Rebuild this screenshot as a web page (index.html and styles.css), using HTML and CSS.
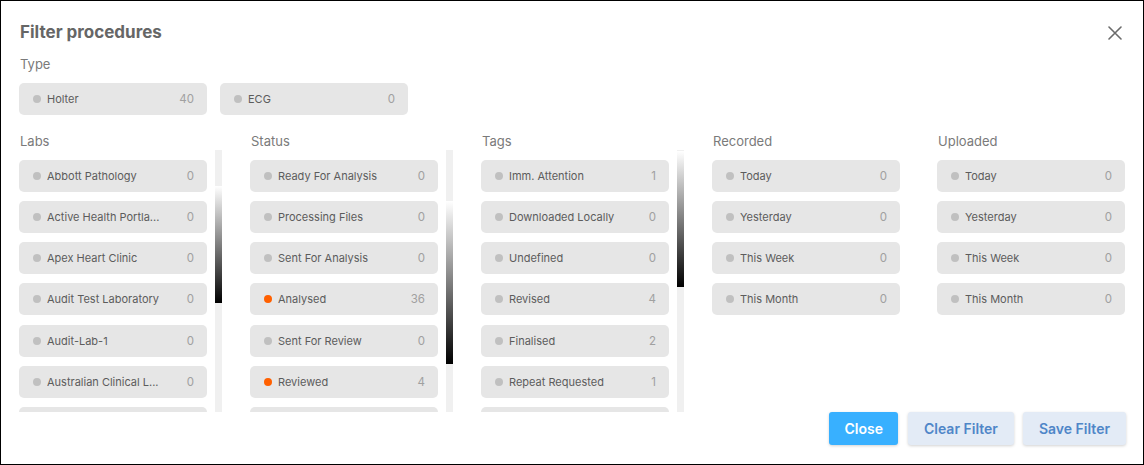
FILE: index.html
```html
<!DOCTYPE html>
<html>
<head>
  <meta charset="UTF-8">
  <meta name="viewport" content="width=device-width, initial-scale=1.0">
  <link rel="stylesheet" href="styles.css">
</head>
<body>
  <div class="modal">
    <div class="modal-header">
      <h1>Filter procedures</h1>
      <button class="close-icon" aria-label="Close">
        <svg width="14" height="14" viewBox="0 0 14 14">
          <path d="M1 1 L13 13 M13 1 L1 13" stroke="#6b6b6b" stroke-width="1.6" stroke-linecap="round"/>
        </svg>
      </button>
    </div>

    <div class="group-label">Type</div>
    <div class="type-row">
      <div class="chip"><span class="dot"></span><span class="name">Holter</span><span class="count">40</span></div>
      <div class="chip"><span class="dot"></span><span class="name">ECG</span><span class="count">0</span></div>
    </div>

    <div class="filters">
      <div class="col">
        <div class="col-label">Labs</div>
        <div class="scroll-wrap">
          <div class="list">
            <div class="chip"><span class="dot"></span><span class="name">Abbott Pathology</span><span class="count">0</span></div>
            <div class="chip"><span class="dot"></span><span class="name">Active Health Portla...</span><span class="count">0</span></div>
            <div class="chip"><span class="dot"></span><span class="name">Apex Heart Clinic</span><span class="count">0</span></div>
            <div class="chip"><span class="dot"></span><span class="name">Audit Test Laboratory</span><span class="count">0</span></div>
            <div class="chip"><span class="dot"></span><span class="name">Audit-Lab-1</span><span class="count">0</span></div>
            <div class="chip"><span class="dot"></span><span class="name">Australian Clinical L...</span><span class="count">0</span></div>
            <!-- next item, still below the fold -->
            <div class="chip"></div>
          </div>
          <div class="scrollbar"><div class="thumb thumb-labs"></div></div>
        </div>
      </div>

      <div class="col">
        <div class="col-label">Status</div>
        <div class="scroll-wrap">
          <div class="list">
            <div class="chip"><span class="dot"></span><span class="name">Ready For Analysis</span><span class="count">0</span></div>
            <div class="chip"><span class="dot"></span><span class="name">Processing Files</span><span class="count">0</span></div>
            <div class="chip"><span class="dot"></span><span class="name">Sent For Analysis</span><span class="count">0</span></div>
            <div class="chip"><span class="dot active"></span><span class="name">Analysed</span><span class="count">36</span></div>
            <div class="chip"><span class="dot"></span><span class="name">Sent For Review</span><span class="count">0</span></div>
            <div class="chip"><span class="dot active"></span><span class="name">Reviewed</span><span class="count">4</span></div>
            <div class="chip"></div>
          </div>
          <div class="scrollbar"><div class="thumb thumb-status"></div></div>
        </div>
      </div>

      <div class="col">
        <div class="col-label">Tags</div>
        <div class="scroll-wrap">
          <div class="list">
            <div class="chip"><span class="dot"></span><span class="name">Imm. Attention</span><span class="count">1</span></div>
            <div class="chip"><span class="dot"></span><span class="name">Downloaded Locally</span><span class="count">0</span></div>
            <div class="chip"><span class="dot"></span><span class="name">Undefined</span><span class="count">0</span></div>
            <div class="chip"><span class="dot"></span><span class="name">Revised</span><span class="count">4</span></div>
            <div class="chip"><span class="dot"></span><span class="name">Finalised</span><span class="count">2</span></div>
            <div class="chip"><span class="dot"></span><span class="name">Repeat Requested</span><span class="count">1</span></div>
            <div class="chip"></div>
          </div>
          <div class="scrollbar"><div class="thumb thumb-tags"></div></div>
        </div>
      </div>

      <div class="col">
        <div class="col-label">Recorded</div>
        <div class="list">
          <div class="chip"><span class="dot"></span><span class="name">Today</span><span class="count">0</span></div>
          <div class="chip"><span class="dot"></span><span class="name">Yesterday</span><span class="count">0</span></div>
          <div class="chip"><span class="dot"></span><span class="name">This Week</span><span class="count">0</span></div>
          <div class="chip"><span class="dot"></span><span class="name">This Month</span><span class="count">0</span></div>
        </div>
      </div>

      <div class="col">
        <div class="col-label">Uploaded</div>
        <div class="list">
          <div class="chip"><span class="dot"></span><span class="name">Today</span><span class="count">0</span></div>
          <div class="chip"><span class="dot"></span><span class="name">Yesterday</span><span class="count">0</span></div>
          <div class="chip"><span class="dot"></span><span class="name">This Week</span><span class="count">0</span></div>
          <div class="chip"><span class="dot"></span><span class="name">This Month</span><span class="count">0</span></div>
        </div>
      </div>
    </div>

    <div class="actions">
      <button class="btn btn-primary">Close</button>
      <button class="btn btn-light">Clear Filter</button>
      <button class="btn btn-light">Save Filter</button>
    </div>
  </div>
</body>
</html>
```

FILE: styles.css
```css
* {
  box-sizing: border-box;
  margin: 0;
  padding: 0;
}

body {
  font-family: Inter, 'Liberation Sans', sans-serif;
  background: #ffffff;
  width: 1144px;
  height: 465px;
}

.modal {
  width: 1144px;
  height: 465px;
  border: 1px solid #000;
  padding: 18px 17px 0 18px;
  display: flex;
  flex-direction: column;
}

.modal-header {
  display: flex;
  align-items: center;
  justify-content: space-between;
  height: 26px;
}

.modal-header h1 {
  font-size: 17px;
  font-weight: 700;
  color: #666;
  margin-left: 1px;
}

.close-icon {
  background: none;
  border: none;
  width: 14px;
  height: 14px;
  margin-right: 4px;
  margin-top: 2px;
  cursor: pointer;
}

.group-label,
.col-label {
  font-size: 13px;
  color: #7a7a7a;
  line-height: 18px;
  margin-left: 1px;
}

.group-label {
  margin-top: 10px;
}

.type-row {
  display: flex;
  gap: 13px;
  margin-top: 10px;
}

.chip {
  width: 188px;
  height: 32px;
  flex-shrink: 0;
  background: #e6e6e6;
  border-radius: 5px;
  display: flex;
  align-items: center;
  padding: 0 13px 0 14px;
  font-size: 11px;
  color: #5c5c5c;
}

.dot {
  width: 8px;
  height: 8px;
  border-radius: 50%;
  background: #c0c0c0;
  margin-right: 6px;
  flex-shrink: 0;
}

.dot.active {
  background: #ff6000;
}

.name {
  flex: 1;
  white-space: nowrap;
  overflow: hidden;
}

.count {
  color: #a0a0a0;
  font-size: 11.5px;
}

.filters {
  display: grid;
  grid-template-columns: 203px 203px 203px 197px 188px;
  column-gap: 28px;
  margin-top: 17px;
  height: 279px;
}

.scroll-wrap {
  display: flex;
  gap: 8px;
  height: 262px;
}

.list {
  display: flex;
  flex-direction: column;
  gap: 9.25px;
  padding-top: 9.5px;
  height: 262px;
  overflow: hidden;
}

.scrollbar {
  width: 7px;
  height: 262px;
  background: #f0f0f0;
  flex-shrink: 0;
}

.thumb {
  width: 7px;
  background: linear-gradient(#ffffff, #000000);
}

.thumb-labs {
  margin-top: 36px;
  height: 117px;
}

.thumb-status {
  margin-top: 51px;
  height: 163px;
}

.thumb-tags {
  margin-top: 1px;
  height: 136px;
}

.actions {
  display: flex;
  justify-content: flex-end;
  gap: 9px;
  margin-top: 1px;
}

.btn {
  height: 33px;
  border: none;
  border-radius: 3px;
  font-family: Inter, 'Liberation Sans', sans-serif;
  font-size: 14px;
  font-weight: 600;
  padding: 0 15px;
  box-shadow: 0 1px 3px rgba(0, 0, 0, 0.18);
  cursor: pointer;
}

.btn-primary {
  background: #38b0ff;
  color: #ffffff;
  margin-right: 1px;
}

.btn-light {
  background: #e3ebf6;
  color: #4f86c8;
  padding: 0 16px;
}
```
